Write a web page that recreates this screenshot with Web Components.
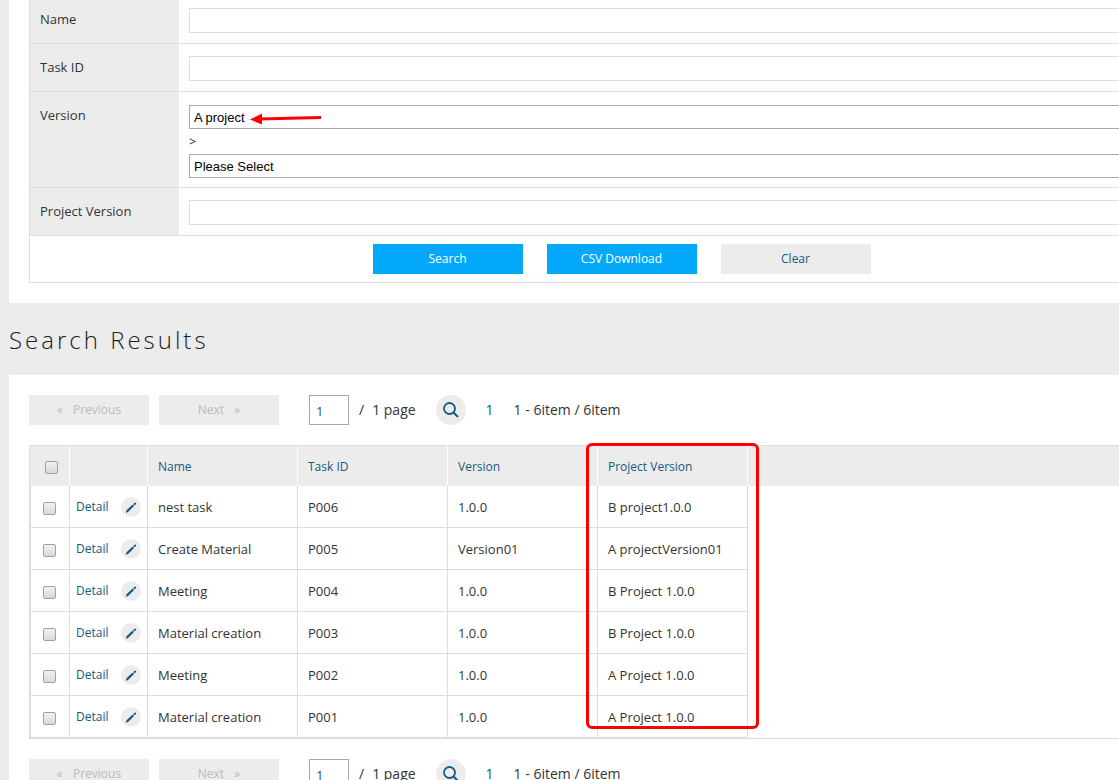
<!DOCTYPE html>
<html lang="en">
<head>
<meta charset="utf-8">
<title>Search Results</title>
<style>
body { margin: 0; background: #ececec; color: #333; font: 13px/20px "Open Sans", "Noto Sans", sans-serif; overflow-x: hidden; }
</style>
</head>
<body>
<task-page></task-page>
<script>
const define = (name, html, setup) => customElements.define(name, class extends HTMLElement {
  constructor() {
    super();
    this.attachShadow({ mode: 'open' });
  }
  connectedCallback() {
    this.shadowRoot.innerHTML = html;
    if (setup) setup(this, this.shadowRoot);
  }
});

define('form-row', `
<style>
  :host { display: flex; min-height: 47px; border-bottom: 1px solid #ddd; }
  label { flex: none; width: 149px; box-sizing: border-box; padding: 13px 10px; background: #ececec; }
  .field { flex: 1; display: flex; flex-direction: column; padding: 12px 0 10px 10px; }
  :host([versions]) .field { padding: 13px 0 9px 10px; }
  input, select { box-sizing: border-box; width: 100%; margin: 0; border: 1px solid #ddd; border-right: 0; border-radius: 0; background: #fff; outline: 0; }
  input { height: 25px; padding: 0 4px; font: inherit; }
  select { height: 24px; padding: 0 4px; border-color: #a9a9a9; appearance: none; color: #000; font: 13px "Liberation Sans", Arial, sans-serif; }
  span { line-height: 25px; }
</style>
<label for="first"></label><div class="field"></div>`, (host, root) => {
  root.querySelector('label').textContent = host.getAttribute('label');
  root.querySelector('.field').innerHTML = host.hasAttribute('versions')
    ? `<select id="first"><option>A project</option><option>B project</option></select><span>&gt;</span>
       <select aria-label="Version detail"><option>Please Select</option></select>`
    : '<input id="first" type="text">';
});

define('action-button', `
<style>
  :host { display: block; width: 150px; }
  :host([kind=page]) { width: 120px; }
  button { display: block; width: 100%; height: 30px; padding: 0; border: 0; background: #03a9f8; color: #fff; font: inherit; font-size: 12px; }
  :host([kind=plain]) button { background: #ececec; color: #145a82; }
  :host([kind=page]) button { background: #ececec; color: #bbb; }
</style>
<button type="button"><slot></slot></button>`, (host, root) => {
  root.querySelector('button').disabled = host.getAttribute('kind') === 'page';
});

define('search-form', `
<style>
  :host { display: block; position: relative; padding: 0 0 20px 20px; background: #fff; }
  form { margin: -4px 0 0; border: 1px solid #ddd; border-width: 0 0 1px 1px; }
  .actions { display: flex; justify-content: center; gap: 24px; padding: 8px 0 8px 94px; }
  svg { position: absolute; left: 240px; top: 116px; }
</style>
<form>
  <form-row label="Name"></form-row>
  <form-row label="Task ID"></form-row>
  <form-row label="Version" versions></form-row>
  <form-row label="Project Version"></form-row>
  <div class="actions">
    <action-button>Search</action-button>
    <action-button>CSV Download</action-button>
    <action-button kind="plain">Clear</action-button>
  </div>
</form>
<svg width="74" height="14" aria-hidden="true"><path d="M10 7 L72 5.500" stroke="red" stroke-width="3"/><path d="M1 7.500 L13 1.500 V12.500 Z" fill="red"/></svg>`);

define('page-nav', `
<style>
  :host { display: flex; align-items: center; height: 30px; font-size: 14px; }
  .next { margin-left: 10px; }
  i { font-style: normal; }
  .prev i { margin-right: 7px; }
  .next i { margin-left: 7px; }
  input { box-sizing: border-box; width: 40px; height: 30px; margin: 0 10px 0 30px; padding: 2px 6px 0; border: 1px solid #a9a9a9; border-radius: 0; color: #145a82; font: inherit; font-size: 13px; outline: 0; }
  .count { margin: 0 20px 0 8px; }
  .go { display: grid; place-items: center; width: 30px; height: 30px; padding: 0; border: 0; border-radius: 50%; background: #ececec; }
  a { margin: 0 20px; color: #145a82; text-decoration: none; }
</style>
<action-button kind="page" class="prev"><i>«</i> Previous</action-button>
<action-button kind="page" class="next">Next <i>»</i></action-button>
<input type="text" value="1" aria-label="Page number"><span>/</span><span class="count">1 page</span>
<button class="go" type="button" aria-label="Go to page"><svg width="16" height="16" viewBox="0 0 16 16" fill="none" stroke="#145a82"><circle cx="6.500" cy="6.500" r="5.500" stroke-width="1.800"/><path d="M10.500 10.500 L15 15" stroke-width="2"/></svg></button>
<a href="#page-1">1</a><span>1 - 6item / 6item</span>`);

define('result-table', `
<style>
  :host { display: block; position: relative; margin: 20px 0; border: 1px solid #ddd; border-right: 0; }
  table { width: 100%; table-layout: fixed; border-spacing: 0; }
  th, td { box-sizing: border-box; padding: 0 10px; border-right: 1px solid #ddd; text-align: left; font-weight: 400; }
  th { height: 40px; background: #ececec; border-right-color: #fff; }
  td { height: 42px; border-bottom: 1px solid #ddd; }
  td:first-child { border-left: 1px solid #ddd; }
  th:last-child, td:last-child { border: 0; }
  .check { width: 40px; padding: 0 0 0 12px; }
  th.check { padding-left: 15px; }
  .links { width: 78px; padding: 0 6px; }
  .data { width: 150px; }
  .tools { display: flex; align-items: center; justify-content: space-between; }
  a { color: #145a82; font-size: 12px; text-decoration: none; }
  .edit { display: grid; place-items: center; width: 20px; height: 20px; border-radius: 50%; background: #ececec; }
  input { appearance: none; display: block; width: 13px; height: 13px; box-sizing: border-box; margin: 3px 0 0; border: 1px solid #a0a0a0; border-radius: 2px; background: linear-gradient(#f2f2f2, #d8d8d8); }
  .mark { position: absolute; left: 556px; top: -3px; width: 167px; height: 280px; border: 3px solid red; border-radius: 6px; pointer-events: none; }
</style>
<table>
  <thead><tr>
    <th class="check"><input type="checkbox" aria-label="Select all"></th><th class="links"></th>
    <th class="data"><a href="#name">Name</a></th><th class="data"><a href="#task">Task ID</a></th>
    <th class="data"><a href="#version">Version</a></th><th class="data"><a href="#project">Project Version</a></th><th></th>
  </tr></thead>
  <tbody></tbody>
</table>
<div class="mark"></div>`, (host, root) => {
  const rows = [
    ['nest task', 'P006', '1.0.0', 'B project1.0.0'],
    ['Create Material', 'P005', 'Version01', 'A projectVersion01'],
    ['Meeting', 'P004', '1.0.0', 'B Project 1.0.0'],
    ['Material creation', 'P003', '1.0.0', 'B Project 1.0.0'],
    ['Meeting', 'P002', '1.0.0', 'A Project 1.0.0'],
    ['Material creation', 'P001', '1.0.0', 'A Project 1.0.0']
  ];
  root.querySelector('tbody').innerHTML = rows.map(row => `<tr>
    <td class="check"><input type="checkbox" aria-label="Select ${row[1]}"></td>
    <td class="links"><div class="tools"><a href="#${row[1]}">Detail</a><a class="edit" href="#edit-${row[1]}" aria-label="Edit ${row[1]}"><svg width="12" height="12" viewBox="0 0 12 12" fill="#145a82"><path d="M.800 11.700 L1.500 9.300 L7.600 3.600 L9 5 L3.100 11 Z M8.200 3 L9.600 1.700 Q10.100 1.300 10.500 1.700 L10.900 2.100 Q11.300 2.500 10.900 3 L9.600 4.400 Z"/></svg></a></div></td>
    ${row.map(text => `<td>${text}</td>`).join('')}<td></td></tr>`).join('');
});

define('task-page', `
<style>
  :host { display: block; padding-left: 9px; overflow: hidden; }
  h2 { margin: 0; padding: 19px 0 17px; color: #222; font-size: 24px; line-height: 36px; font-weight: 300; letter-spacing: 3px; }
  .results { padding: 20px 0 20px 20px; background: #fff; }
</style>
<search-form></search-form>
<h2>Search Results</h2>
<section class="results"><page-nav></page-nav><result-table></result-table><page-nav></page-nav></section>`);
</script>
</body>
</html>
